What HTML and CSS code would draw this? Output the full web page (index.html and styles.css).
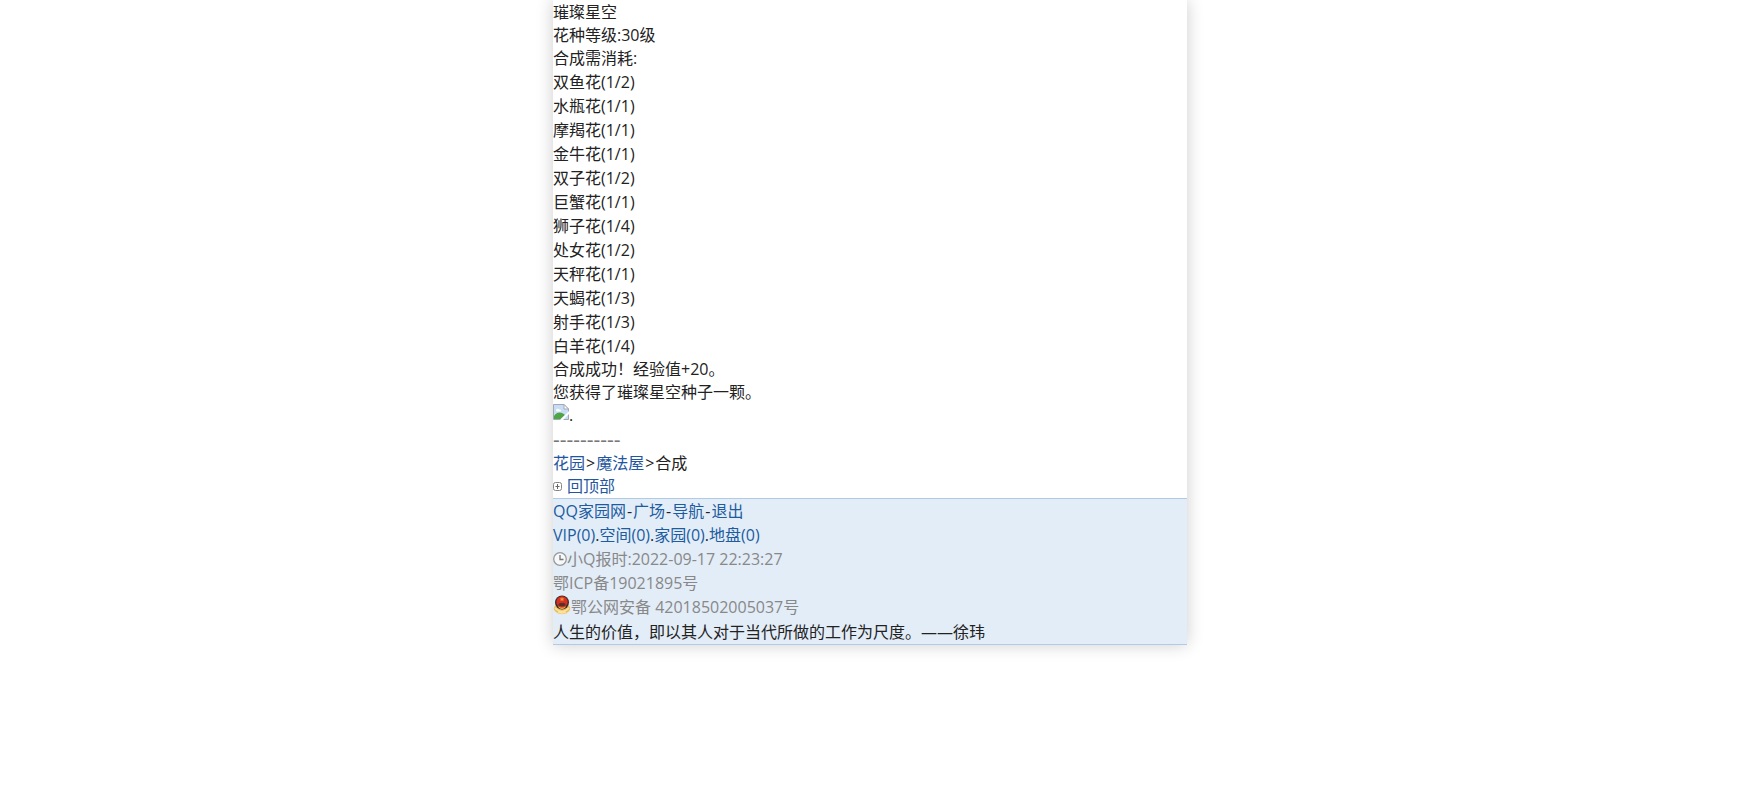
FILE: index.html
```html
<!DOCTYPE html>
<html lang="zh-CN">
<head>
  <meta charset="UTF-8">
  <title>合成</title>
  <link rel="stylesheet" href="styles.css">
</head>
<body>
  <div class="page" id="top">
    <div class="info">
      <div>璀璨星空</div>
      <div>花种等级:30级</div>
      <div>合成需消耗:</div>
    </div>
    <ul class="flowers">
      <li>双鱼花(1/2)</li>
      <li>水瓶花(1/1)</li>
      <li>摩羯花(1/1)</li>
      <li>金牛花(1/1)</li>
      <li>双子花(1/2)</li>
      <li>巨蟹花(1/1)</li>
      <li>狮子花(1/4)</li>
      <li>处女花(1/2)</li>
      <li>天秤花(1/1)</li>
      <li>天蝎花(1/3)</li>
      <li>射手花(1/3)</li>
      <li>白羊花(1/4)</li>
    </ul>
    <div class="info">
      <div>合成成功！经验值+20。</div>
      <div>您获得了璀璨星空种子一颗。</div>
    </div>
    <div class="picture">
      <svg class="icon" width="16" height="16" viewBox="0 0 16 16">
        <path d="M.5 .5H11L15.500 5V15.500H.5Z" fill="#c9dcf5" stroke="#a3a9b3"/>
        <path d="M3 6.500c0-2 2.500-2.500 3-1 2-.5 2.500 1.500 1.500 2H3.500Z" fill="#fff"/>
        <path d="M1 15V12C3 9 6 7.500 10 9.500L12 11L7.500 15Z" fill="#4fa446"/>
        <path d="M11 .5V5H15.500Z" fill="#fff" stroke="#a3a9b3"/>
        <path d="M7 16L16 7V10L10 16Z" fill="#fff"/>
      </svg>
      <span>.</span>
    </div>
    <div class="line">----------</div>
    <div class="path"><a href="#">花园</a><span class="sep">&gt;</span><a href="#">魔法屋</a><span class="sep">&gt;</span>合成</div>
    <div class="back">
      <svg width="9" height="9" viewBox="0 0 9 9">
        <rect x=".5" y=".5" width="8" height="8" rx="2" fill="#fff" stroke="#858585"/>
        <path d="M4.500 2V7M2.500 4.500H6.500" stroke="#666" fill="none"/>
      </svg>
      <a href="#top">回顶部</a>
    </div>

    <div class="footer">
      <div><a href="#">QQ家园网</a><span class="sep">-</span><a href="#">广场</a><span class="sep">-</span><a href="#">导航</a><span class="sep">-</span><a href="#">退出</a></div>
      <div><a href="#">VIP(0)</a>.<a href="#">空间(0)</a>.<a href="#">家园(0)</a>.<a href="#">地盘(0)</a></div>
      <div class="gray row">
        <svg width="14" height="14" viewBox="0 0 14 14">
          <circle cx="7" cy="7" r="6.300" fill="#f7f8fa" stroke="#999" stroke-width="1.300"/>
          <path d="M7 3V7.500H10.500" fill="none" stroke="#777" stroke-width="1.300"/>
        </svg>
        <span>小Q报时:2022-09-17 22:23:27</span>
      </div>
      <div class="gray">鄂ICP备19021895号</div>
      <div class="gray row police">
        <svg width="18" height="20" viewBox="0 0 18 20">
          <path d="M3 10C0 12 0 15 3 17C6 20 12 20 15 17C18 15 18 12 15 10Z" fill="#edbd61"/>
          <path d="M2 13Q9 20 16 13M5 17Q9 19 13 17" fill="none" stroke="#fae3a0" stroke-width="1.500"/>
          <circle cx="9" cy="7.500" r="7" fill="#352c2b"/>
          <circle cx="9" cy="7" r="5.700" fill="#d92f20"/>
          <path d="M9 2L9.700 3.600H11.400L10.100 4.700L10.600 6.300L9 5.300L7.400 6.300L7.900 4.700L6.600 3.600H8.300Z" fill="#f39a38"/>
          <path d="M5.500 10.500V9L7 8H11L12.500 9V10.500Q9 12 5.500 10.500Z" fill="#54312b"/>
          <path d="M5 11Q9 14 13 11L12 13Q9 15 6 13Z" fill="#efaa48"/>
        </svg>
        <span>鄂公网安备 42018502005037号</span>
      </div>
      <div>人生的价值，即以其人对于当代所做的工作为尺度。——徐玮</div>
    </div>
  </div>
</body>
</html>
```

FILE: styles.css
```css
body {
  margin: 0;
  min-height: 100vh;
  background: #fff;
  color: #222;
  font-family: "Open Sans", "Noto Sans CJK SC", sans-serif;
  font-size: 16px;
  line-height: 24px;
}

a {
  color: #2456a0;
  text-decoration: none;
}

.page {
  box-sizing: border-box;
  max-width: 634px;
  margin: 0 auto;
  padding-top: 1px;
  background: #fff;
  box-shadow: 0 0 16px rgba(0, 0, 0, 0.2);
}

.info {
  line-height: 23px;
}

.flowers {
  list-style: none;
  margin: 0;
  padding: 0;
}

.picture {
  display: flex;
  align-items: flex-start;
  line-height: 23px;
}

.line {
  font-size: 21px;
  color: #777;
}

.sep {
  padding: 0 1px;
}

.back {
  display: flex;
  align-items: center;
  gap: 5px;
  line-height: 23px;
}

.footer {
  background: #e3edf8;
  border-top: 1px solid #b0cbe6;
  border-bottom: 1px solid #b0cbe6;
}

.footer a {
  color: #1c5c9f;
}

.row {
  display: flex;
  align-items: center;
}

.gray {
  color: #888;
}

.police {
  line-height: 25px;
}

.police svg {
  align-self: flex-start;
}
```
